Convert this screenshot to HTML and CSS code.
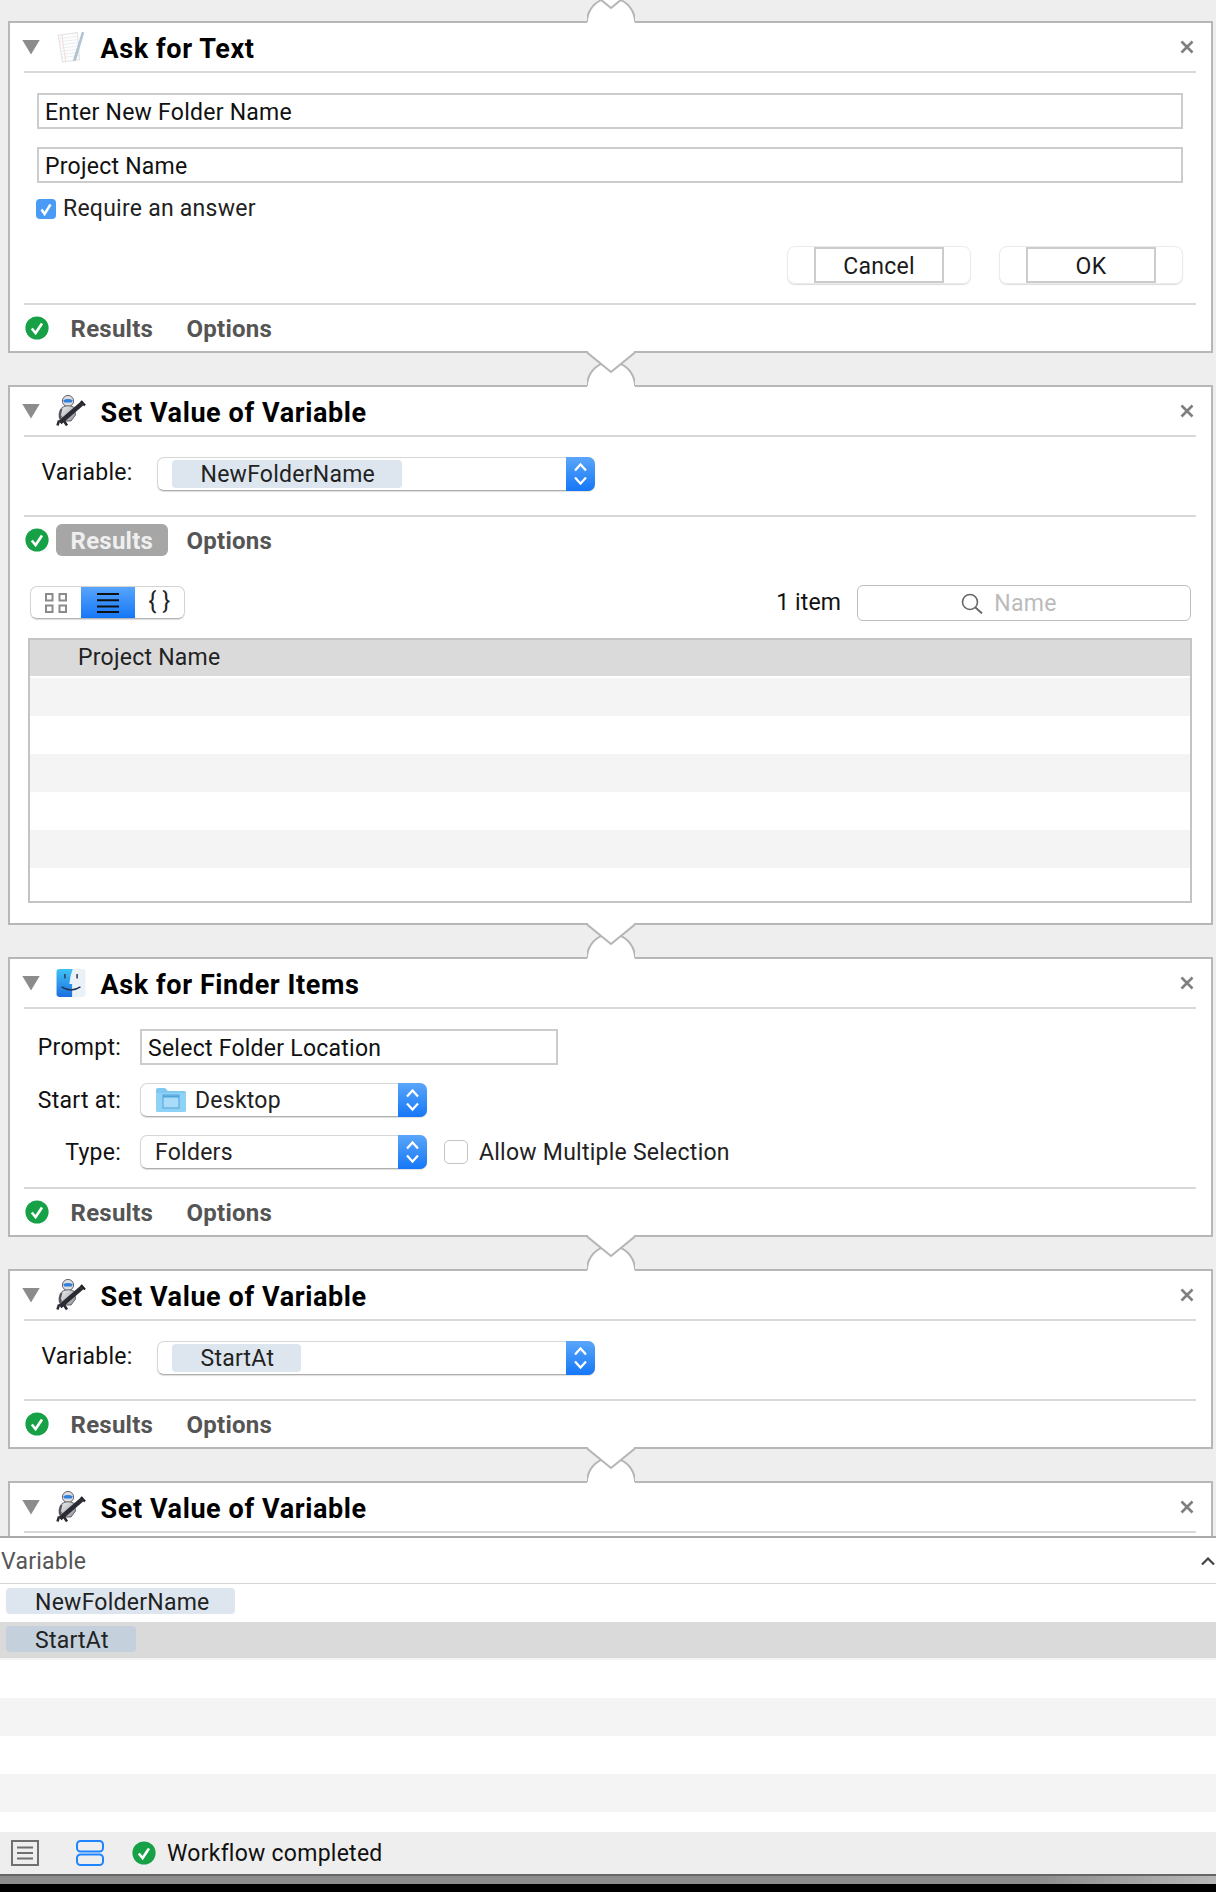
FILE: index.html
```html
<!DOCTYPE html>
<html lang="en">
<head>
<meta charset="utf-8">
<title>Workflow</title>
<link rel="stylesheet" href="styles.css">
</head>
<body>
<svg class="defs" aria-hidden="true">
  <defs>
    <linearGradient id="robotBody" x1="0" y1="0" x2="1" y2="1"><stop offset="0" stop-color="#f2f2f5"/><stop offset="1" stop-color="#8f9197"/></linearGradient>
    <linearGradient id="finderL" x1="0" y1="0" x2="0" y2="1"><stop offset="0" stop-color="#3fc3f7"/><stop offset="1" stop-color="#1c6fe0"/></linearGradient>
    <symbol id="i-close" viewBox="0 0 14 14"><path d="M1.5 1.5 12.5 12.5M12.5 1.5 1.5 12.5" fill="none" stroke="#7f7f7f" stroke-width="2.6"/></symbol>
    <symbol id="i-ok" viewBox="0 0 24 24"><ellipse cx="12" cy="12" rx="11.6" ry="11.6" fill="#17a147"/><path d="M6.8 12.5 10.6 17 17 7.5" fill="none" stroke="#fff" stroke-width="2.6"/></symbol>
    <symbol id="i-step" viewBox="0 0 29 34"><path d="M9 13.5 14.5 7.5 20 13.5M9 20.5 14.5 26.5 20 20.5" fill="none" stroke="#fff" stroke-width="2.2"/></symbol>
    <symbol id="i-note" viewBox="0 0 28 30">
      <path d="M2 4 20 1.5 22 27 6 29Z" fill="#fdfdfd" stroke="#e2e2e2" stroke-width="1"/>
      <path d="M5.5 4 9 28.5" stroke="#f7d9d9" stroke-width="1" fill="none"/>
      <path d="M3 7 20 5M3.4 10 20.4 8M3.7 13 20.6 11M4 16 20.9 14M4.3 19 21.1 17M4.6 22 21.4 20M5 25 21.6 23" stroke="#e8ebf0" stroke-width=".8" fill="none"/>
      <path d="M24.500 1 26 1.600 18.500 27 16.500 28 16.800 25.500Z" fill="#b4c6d6" stroke="#9cb0c2" stroke-width=".5"/>
    </symbol>
    <symbol id="i-robot" viewBox="0 0 30 32">
      <circle cx="12" cy="6" r="5.600" fill="#dcdde0" stroke="#55575c" stroke-width=".9"/>
      <path d="M7.200 5.200Q12 2.600 16.800 5.200L15.600 7.400H8.400Z" fill="#2f7fdc"/>
      <path d="M6 12.500Q12 9 18.500 12.500L19.500 20 15 26H8L4.500 20Z" fill="url(#robotBody)" stroke="#55575c" stroke-width=".9"/>
      <path d="M5.500 14Q2.500 19 4.500 24" fill="none" stroke="#55575c" stroke-width="2.200"/>
      <path d="M4 27.500 26 8.500" stroke="#2a2b33" stroke-width="4.400"/>
      <path d="M25 6 29 10.500" stroke="#1e1f24" stroke-width="2.200"/>
      <path d="M8 26 11 30.500M3 25.500 1.500 30.500" stroke="#2a2b33" stroke-width="2.600" fill="none"/>
    </symbol>
    <symbol id="i-finder" viewBox="0 0 27 26">
      <rect x=".5" y=".5" width="26" height="25" rx="2.5" fill="#eaf1f7"/>
      <path d="M3 .5H15Q12.5 7 12 14H14.5V25.5H3A2.5 2.5 0 0 1 .5 23V3A2.5 2.5 0 0 1 3 .5Z" fill="url(#finderL)"/>
      <path d="M8 5V9M19 5V9" stroke="#33415a" stroke-width="1.4" fill="none"/>
      <path d="M5 16.5Q13.5 22 22 16.5" stroke="#22324f" stroke-width="1.3" fill="none"/>
    </symbol>
    <symbol id="i-folder" viewBox="0 0 30 24">
      <path d="M0 2Q0 0 2 0H9L12 3H28Q30 3 30 5V22Q30 24 28 24H2Q0 24 0 22Z" fill="#7ec8f2"/>
      <path d="M0 5H30V22Q30 24 28 24H2Q0 24 0 22Z" fill="#8ed2f6"/>
      <rect x="7" y="7" width="16" height="13" fill="#a9dcf8" stroke="#4ea3d8"/>
      <path d="M7 8.5H23" stroke="#4ea3d8" stroke-width="2"/>
    </symbol>
    <symbol id="i-link" viewBox="0 0 48 38">
      <path d="M0 38V36A24 24 0 0 1 14 14.2L24 22 34 14.2A24 24 0 0 1 48 36V38Z" fill="#fff"/>
      <path d="M1 0H47V3L24 22 1 3Z" fill="#fff"/>
      <path d="M0 36A24 24 0 0 1 14 14.2M34 14.2A24 24 0 0 1 48 36" fill="none" stroke="#b5b5b5" stroke-width="2"/>
      <path d="M-.5 2 24 22 48.5 2" fill="none" stroke="#b5b5b5" stroke-width="2"/>
    </symbol>
  </defs>
</svg>

<main class="canvas">
  <div class="link link-first"><svg class="link-svg"><use href="#i-link"/></svg></div>

  <section class="card">
    <header class="head">
      <span class="tri"></span>
      <svg class="app"><use href="#i-note"/></svg>
      <h2 class="title">Ask for Text</h2>
      <svg class="close"><use href="#i-close"/></svg>
    </header>
    <div class="rule"></div>
    <div class="ask">
      <div class="field">Enter New Folder Name</div>
      <div class="field field-second">Project Name</div>
      <label class="check check-on"><span class="box box-on"><svg class="tick" viewBox="0 0 20 20"><path d="M5.5 10.5 8.6 15 14.5 5.5" fill="none" stroke="#fff" stroke-width="2.4"/></svg></span>Require an answer</label>
      <div class="buttons">
        <div class="btn"><span class="btn-in">Cancel</span></div>
        <div class="btn"><span class="btn-in">OK</span></div>
      </div>
    </div>
    <div class="rule"></div>
    <footer class="foot">
      <svg class="ok"><use href="#i-ok"/></svg>
      <span class="tab">Results</span>
      <span class="tab">Options</span>
    </footer>
  </section>

  <div class="link"><svg class="link-svg"><use href="#i-link"/></svg></div>

  <section class="card">
    <header class="head">
      <span class="tri"></span>
      <svg class="app"><use href="#i-robot"/></svg>
      <h2 class="title">Set Value of Variable</h2>
      <svg class="close"><use href="#i-close"/></svg>
    </header>
    <div class="rule"></div>
    <div class="varrow">
      <span class="varlabel">Variable:</span>
      <div class="select select-var">
        <span class="chip">NewFolderName</span>
        <span class="step"><svg class="step-svg"><use href="#i-step"/></svg></span>
      </div>
    </div>
    <div class="rule"></div>
    <footer class="foot">
      <svg class="ok"><use href="#i-ok"/></svg>
      <span class="tab tab-on">Results</span>
      <span class="tab">Options</span>
    </footer>
    <div class="results">
      <div class="toolbar">
        <div class="seg">
          <span class="seg-cell seg-grid"><svg class="seg-svg" viewBox="0 0 22 20"><path d="M1 1h6.5v6.5H1zM14.5 1H21v6.5h-6.5zM1 12.5h6.5V19H1zM14.5 12.5H21V19h-6.5z" fill="none" stroke="#8a8a8a" stroke-width="2"/></svg></span>
          <span class="seg-cell seg-list"><svg class="seg-svg" viewBox="0 0 22 20"><path d="M0 1H22M0 7.300H22M0 13.500H22M0 19H22" stroke="#111" stroke-width="2"/></svg></span>
          <span class="seg-cell seg-code">{ }</span>
        </div>
        <span class="count">1 item</span>
        <div class="search">
          <svg class="search-svg" viewBox="0 0 22 21"><circle cx="9" cy="9" r="7.500" fill="none" stroke="#666" stroke-width="1.600"/><path d="M14.500 14.500 21 20.500" stroke="#666" stroke-width="1.800"/></svg>
          <span class="search-text">Name</span>
        </div>
      </div>
      <div class="table">
        <div class="thead">Project Name</div>
        <div class="tbody">
          <div class="tr tr-alt"></div>
          <div class="tr"></div>
          <div class="tr tr-alt"></div>
          <div class="tr"></div>
          <div class="tr tr-alt"></div>
        </div>
      </div>
    </div>
  </section>

  <div class="link"><svg class="link-svg"><use href="#i-link"/></svg></div>

  <section class="card">
    <header class="head">
      <span class="tri"></span>
      <svg class="app"><use href="#i-finder"/></svg>
      <h2 class="title">Ask for Finder Items</h2>
      <svg class="close"><use href="#i-close"/></svg>
    </header>
    <div class="rule"></div>
    <div class="form">
      <span class="flabel">Prompt:</span>
      <div class="field field-prompt">Select Folder Location</div>
      <span class="flabel">Start at:</span>
      <div class="select select-form">
        <svg class="folder"><use href="#i-folder"/></svg>
        <span class="opt">Desktop</span>
        <span class="step"><svg class="step-svg"><use href="#i-step"/></svg></span>
      </div>
      <span class="flabel">Type:</span>
      <div class="type-row">
        <div class="select select-form">
          <span class="opt opt-plain">Folders</span>
          <span class="step"><svg class="step-svg"><use href="#i-step"/></svg></span>
        </div>
        <label class="check"><span class="box box-off"></span>Allow Multiple Selection</label>
      </div>
    </div>
    <div class="rule"></div>
    <footer class="foot">
      <svg class="ok"><use href="#i-ok"/></svg>
      <span class="tab">Results</span>
      <span class="tab">Options</span>
    </footer>
  </section>

  <div class="link"><svg class="link-svg"><use href="#i-link"/></svg></div>

  <section class="card">
    <header class="head">
      <span class="tri"></span>
      <svg class="app"><use href="#i-robot"/></svg>
      <h2 class="title">Set Value of Variable</h2>
      <svg class="close"><use href="#i-close"/></svg>
    </header>
    <div class="rule"></div>
    <div class="varrow">
      <span class="varlabel">Variable:</span>
      <div class="select select-var">
        <span class="chip">StartAt</span>
        <span class="step"><svg class="step-svg"><use href="#i-step"/></svg></span>
      </div>
    </div>
    <div class="rule"></div>
    <footer class="foot">
      <svg class="ok"><use href="#i-ok"/></svg>
      <span class="tab">Results</span>
      <span class="tab">Options</span>
    </footer>
  </section>

  <div class="link"><svg class="link-svg"><use href="#i-link"/></svg></div>

  <section class="card card-cut">
    <header class="head">
      <span class="tri"></span>
      <svg class="app"><use href="#i-robot"/></svg>
      <h2 class="title">Set Value of Variable</h2>
      <svg class="close"><use href="#i-close"/></svg>
    </header>
    <div class="rule"></div>
  </section>
</main>

<section class="vars">
  <div class="vars-head">
    <span class="vars-title">Variable</span>
    <svg class="caret" viewBox="0 0 14 8"><path d="M1 7.500 7 1.500 13 7.500" fill="none" stroke="#444" stroke-width="2.200"/></svg>
  </div>
  <div class="vrow"><span class="chip chip-list">NewFolderName</span></div>
  <div class="vrow vrow-sel"><span class="chip chip-list chip-sel">StartAt</span></div>
  <div class="vrow"></div>
  <div class="vrow vrow-alt"></div>
  <div class="vrow"></div>
  <div class="vrow vrow-alt"></div>
  <div class="vrow vrow-end"></div>
</section>

<footer class="status">
  <svg class="st-log" viewBox="0 0 28 26"><rect x="1" y="1" width="26" height="24" fill="none" stroke="#6f6f6f" stroke-width="2"/><path d="M6 7.500H22M6 13H22M6 18.500H22" stroke="#6f6f6f" stroke-width="1.800"/></svg>
  <svg class="st-rows" viewBox="0 0 28 26"><rect x="1" y="1" width="26" height="10.500" rx="3.500" fill="none" stroke="#1f84ff" stroke-width="2"/><rect x="1" y="14.500" width="26" height="10.500" rx="3.500" fill="none" stroke="#1f84ff" stroke-width="2"/></svg>
  <svg class="st-ok"><use href="#i-ok"/></svg>
  <span class="st-text">Workflow completed</span>
</footer>
<div class="edge"></div>
<div class="black"></div>
</body>
</html>
```

FILE: styles.css
```css
* { box-sizing: border-box; }
html, body { margin: 0; padding: 0; }
body {
  width: 1216px;
  height: 1892px;
  overflow: hidden;
  background: #eeeeee;
  color: #111;
  font-family: Roboto, "Liberation Sans", sans-serif;
  font-size: 23px;
  letter-spacing: .25px;
}
.defs { display: block; width: 0; height: 0; }

.canvas {
  display: flex;
  flex-direction: column;
  height: 1536px;
  padding: 0 3px 0 8px;
  overflow: hidden;
}
.link {
  display: flex;
  justify-content: center;
  flex: none;
  height: 38px;
  margin: -3px 0;
  position: relative;
  z-index: 1;
}
.link-first { margin-top: -14px; }
.link-svg { display: block; width: 48px; height: 38px; overflow: visible; }

.card {
  flex: none;
  background: #fff;
  border: 2px solid #b7b7b7;
}
.card-cut { height: 100px; }

.head {
  display: flex;
  align-items: center;
  height: 48px;
  padding: 2px 18px 0 12px;
}
.tri {
  flex: none;
  width: 18px;
  height: 15px;
  margin-bottom: 2px;
  background: #8c8c8c;
  clip-path: polygon(0 0, 100% 0, 50% 100%);
}
.app { flex: none; width: 30px; height: 32px; margin-left: 16px; margin-bottom: 2px; }
.title {
  flex: 1;
  margin: 2px 0 0 14.500px;
  font-size: 27px;
  font-weight: 700;
  letter-spacing: .6px;
  color: #000;
}
.close { flex: none; width: 14px; height: 14px; margin-bottom: 3px; margin-right: -1px; }
.rule { height: 2px; margin: 0 15px 0 14px; background: #d9d9d9; }

.foot {
  display: flex;
  align-items: center;
  height: 46px;
  padding-left: 15px;
}
.ok { flex: none; width: 24px; height: 24px; margin-right: 7px; }
.tab {
  display: flex;
  align-items: center;
  height: 32px;
  padding: 1px 14.500px 0;
  margin-right: 4.400px;
  border-radius: 6px;
  color: #555;
  font-weight: 700;
  font-size: 24px;
  letter-spacing: .25px;
}
.tab-on { background: #a6a6a6; color: #efefef; }

.ask { height: 230px; padding: 20px 28px 0 27px; }
.field {
  display: flex;
  align-items: center;
  height: 36px;
  padding: 3px 0 0 6px;
  border: 2px solid #cccccc;
  background: #fff;
  color: #111;
}
.field-second { margin-top: 18px; }
.check { display: flex; align-items: center; color: #222; }
.check-on { margin-top: 15px; margin-left: -1px; height: 20px; }
.box { flex: none; display: block; border-radius: 4px; }
.box-on { width: 20px; height: 20px; margin: 2px 7px 0 0; background: #4a9bf6; }
.box-off {
  width: 24px;
  height: 24px;
  margin-right: 11px;
  background: #fff;
  border: 1.500px solid #c4c4c4;
  border-radius: 5px;
}
.tick { display: block; width: 20px; height: 20px; }
.buttons { display: flex; justify-content: flex-end; gap: 28px; margin-top: 28px; }
.btn {
  display: flex;
  justify-content: center;
  width: 184px;
  height: 38px;
  border: 1px solid #ebebeb;
  border-radius: 8px;
  box-shadow: 0 1px 1px #dcdcdc;
}
.btn-in {
  display: flex;
  align-items: center;
  justify-content: center;
  width: 130px;
  height: 36px;
  padding-top: 3px;
  border: 2px solid #cccccc;
  color: #1a1a1a;
}

.varrow { display: flex; height: 78px; padding: 20px 0 0 0; align-items: flex-start; }
.varlabel { width: 122.500px; height: 32px; line-height: 32px; text-align: right; color: #111; }
.select {
  display: flex;
  align-items: center;
  height: 34px;
  background: #fff;
  border: 1px solid #d6d6d6;
  border-bottom-color: #aeaeae;
  border-radius: 7px;
  box-shadow: 0 1px 1px #dedede;
  color: #222;
}
.select-var { width: 438px; margin-left: 24.500px; padding-left: 14px; }
.select-form { width: 287px; }
.step {
  margin-left: auto;
  margin-right: -1px;
  flex: none;
  display: block;
  width: 29px;
  height: 34px;
  border-radius: 0 7px 7px 0;
  background: linear-gradient(#5aa6fa, #1577f7);
}
.step-svg { display: block; width: 29px; height: 34px; }
.chip {
  display: flex;
  align-items: center;
  height: 28px;
  padding: 1px 27px 0 28.500px;
  border-radius: 4px;
  background: #dde6ef;
  color: #222;
}

.results { padding: 0 0 20px 18px; margin-top: 22px; }
.toolbar { display: flex; align-items: center; height: 36px; padding-right: 20px; }
.seg {
  display: flex;
  width: 155px;
  height: 33px;
  margin: 0 0 1px 2px;
  overflow: hidden;
  border: 1px solid #d4d4d4;
  border-bottom-color: #b4b4b4;
  border-radius: 7px;
  box-shadow: 0 1px 1px #dedede;
}
.seg-cell { display: flex; align-items: center; justify-content: center; height: 100%; }
.seg-grid { width: 50px; }
.seg-list { width: 54px; background: linear-gradient(#58a5fb, #1577f7); }
.seg-code { flex: 1; color: #222; padding-bottom: 2px; }
.seg-svg { display: block; width: 22px; height: 20px; }
.count { margin-left: auto; margin-right: 16px; color: #111; padding-bottom: 1px; letter-spacing: .1px; }
.search {
  display: flex;
  align-items: center;
  justify-content: center;
  gap: 11px;
  width: 334px;
  height: 36px;
  padding: 1px 30px 0 0;
  border: 1px solid #bdbdbd;
  border-radius: 6px;
}
.search-svg { display: block; width: 22px; height: 21px; }
.search-text { color: #bbb; }
.table {
  margin-top: 17px;
  width: 1164px;
  height: 265px;
  border: 2px solid #c4c4c4;
}
.thead {
  display: flex;
  align-items: center;
  height: 36px;
  padding: 0 0 2px 48px;
  background: #dadada;
  color: #222;
}
.tbody { margin-top: 2px; }
.tr { height: 38px; background: #fff; }
.tr-alt { background: #f4f4f4; }

.form {
  display: grid;
  grid-template-columns: 111px 1fr;
  column-gap: 19px;
  row-gap: 18px;
  align-items: center;
  height: 178px;
  padding-top: 20px;
  align-content: start;
}
.flabel { text-align: right; color: #111; }
.field-prompt { width: 418px; }
.folder { flex: none; width: 30px; height: 24px; margin-left: 15px; }
.opt { margin-left: 9px; padding-top: 1px; }
.opt-plain { margin-left: 14px; }
.type-row { display: flex; align-items: center; }
.type-row .check { margin-left: 17px; }

.vars { background: #fff; border-top: 2px solid #a9a9a9; height: 296px; }
.vars-head {
  display: flex;
  align-items: center;
  justify-content: space-between;
  height: 46px;
  padding: 0 1px;
  border-bottom: 1px solid #d4d4d4;
  color: #555;
}
.vars-title { padding-top: 1px; }
.caret { display: block; width: 14px; height: 8px; }
.vrow { height: 38px; padding: 4px 0 0 6px; }
.vrow-sel { background: linear-gradient(#dadada 36px, #f4f4f4 36px); }
.vrow-alt { background: #f4f4f4; }
.vrow-end { height: 20px; }
.chip-list { width: max-content; height: 26px; padding: 2px 25px 0 29px; }
.chip-sel { background: #c4d0dc; padding-right: 27px; }

.status {
  display: flex;
  align-items: center;
  height: 42px;
  padding-left: 11px;
  background: #eeeeee;
}
.st-log { flex: none; width: 28px; height: 26px; }
.st-rows { flex: none; width: 28px; height: 26px; margin-left: 37px; }
.st-ok { flex: none; width: 24px; height: 24px; margin-left: 28px; }
.st-text { margin-left: 11px; padding-top: 1px; color: #111; }
.edge {
  height: 10px;
  border-top: 2px solid #666;
  background: linear-gradient(90deg, #8c8c8c 85%, #b8b8b8 100%);
}
.black { height: 8px; background: #000; }
```
